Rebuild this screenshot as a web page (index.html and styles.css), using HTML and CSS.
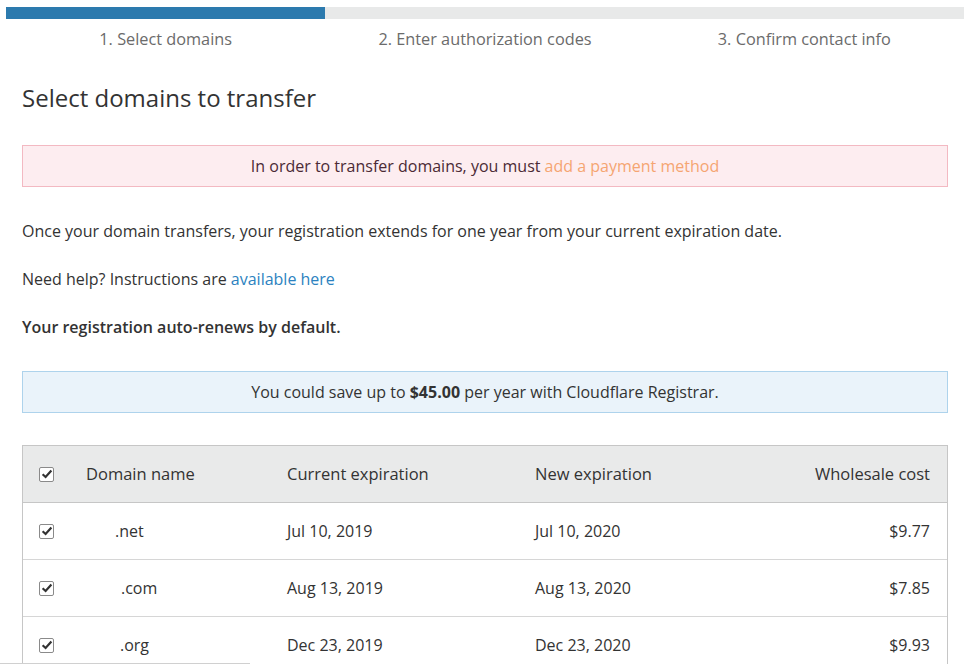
FILE: index.html
```html
<!DOCTYPE html>
<html>
<head>
<meta charset="utf-8">
<link rel="stylesheet" href="styles.css">
</head>
<body>
<div class="page">
  <div class="progress">
    <div class="progress-fill"></div>
  </div>
  <div class="steps">
    <div class="step">1. Select domains</div>
    <div class="step">2. Enter authorization codes</div>
    <div class="step">3. Confirm contact info</div>
  </div>
  <div class="content">
    <h1 class="title">Select domains to transfer</h1>
    <div class="alert alert-error">In order to transfer domains, you must <a class="link-orange" href="#">add a payment method</a></div>
    <p class="text">Once your domain transfers, your registration extends for one year from your current expiration date.</p>
    <p class="text">Need help? Instructions are <a class="link-blue" href="#">available here</a></p>
    <p class="text strong">Your registration auto-renews by default.</p>
    <div class="alert alert-info">You could save up to <b class="amount">$45.00</b> per year with Cloudflare Registrar.</div>
    <div class="table">
      <div class="row head">
        <div class="cell c-check"><span class="cb"><svg viewBox="0 0 14 14" width="14" height="14"><path d="M2.6 7.2 L5.6 10 L11.4 3.6" fill="none" stroke="#333" stroke-width="2.2"/></svg></span></div>
        <div class="cell c-name">Domain name</div>
        <div class="cell c-cur">Current expiration</div>
        <div class="cell c-new">New expiration</div>
        <div class="cell c-cost">Wholesale cost</div>
      </div>
      <div class="row">
        <div class="cell c-check"><span class="cb"><svg viewBox="0 0 14 14" width="14" height="14"><path d="M2.6 7.2 L5.6 10 L11.4 3.6" fill="none" stroke="#333" stroke-width="2.2"/></svg></span></div>
        <div class="cell c-name"><span class="dom dom-net">.net</span></div>
        <div class="cell c-cur">Jul 10, 2019</div>
        <div class="cell c-new">Jul 10, 2020</div>
        <div class="cell c-cost">$9.77</div>
      </div>
      <div class="row">
        <div class="cell c-check"><span class="cb"><svg viewBox="0 0 14 14" width="14" height="14"><path d="M2.6 7.2 L5.6 10 L11.4 3.6" fill="none" stroke="#333" stroke-width="2.2"/></svg></span></div>
        <div class="cell c-name"><span class="dom dom-com">.com</span></div>
        <div class="cell c-cur">Aug 13, 2019</div>
        <div class="cell c-new">Aug 13, 2020</div>
        <div class="cell c-cost">$7.85</div>
      </div>
      <div class="row">
        <div class="cell c-check"><span class="cb"><svg viewBox="0 0 14 14" width="14" height="14"><path d="M2.6 7.2 L5.6 10 L11.4 3.6" fill="none" stroke="#333" stroke-width="2.2"/></svg></span></div>
        <div class="cell c-name"><span class="dom dom-org">.org</span></div>
        <div class="cell c-cur">Dec 23, 2019</div>
        <div class="cell c-new">Dec 23, 2020</div>
        <div class="cell c-cost">$9.93</div>
      </div>
    </div>
  </div>
  <div class="scrollbar"></div>
</div>
</body>
</html>
```
FILE: styles.css
```css
html, body {
  margin: 0;
  padding: 0;
  background: #fff;
  overflow: hidden;
}
body {
  font-family: "Open Sans", "Noto Sans", sans-serif;
  font-size: 16px;
  color: #333;
}
.page {
  width: 966px;
  height: 664px;
  position: relative;
  overflow: hidden;
}
.progress {
  margin: 7px 2px 0 6px;
  height: 12px;
  background: #e8e9e9;
}
.progress-fill {
  width: 33.33%;
  height: 100%;
  background: #2c7aae;
}
.steps {
  display: grid;
  grid-template-columns: 1fr 1fr 1fr;
  margin: 0 2px 0 6px;
}
.step {
  text-align: center;
  color: #6b6b6b;
  font-size: 16.3px;
  line-height: 20px;
  padding-top: 10px;
}
.content {
  padding: 0 18px 0 22px;
}
.title {
  font-weight: 400;
  font-size: 24px;
  line-height: 30px;
  margin: 34px 0 0 0;
  color: #333;
}
.alert {
  text-align: center;
  height: 40px;
  line-height: 40px;
  font-size: 16px;
}
.alert-error {
  margin-top: 32px;
  background: #fdedf0;
  border: 1px solid #f3b9c2;
  color: #4b2a35;
}
.link-orange { color: #f5a572; text-decoration: none; }
.link-blue { color: #2c82c0; text-decoration: none; }
.text {
  margin: 0;
  line-height: 20px;
  font-size: 16px;
}
.alert-error + .text { margin-top: 34px; }
.text + .text { margin-top: 28px; }
.strong { font-weight: 600; }
.alert-info {
  margin-top: 34px;
  background: #eaf3fa;
  border: 1px solid #aed3ec;
  color: #333;
}
.amount { font-weight: 700; }
.table {
  margin-top: 32px;
  border: 1px solid #c6c6c6;
  border-bottom: none;
}
.row {
  display: flex;
  align-items: center;
  height: 56px;
  border-top: 1px solid #d6d6d6;
  background: #fff;
}
.row.head {
  border-top: none;
  background: #e9eaea;
  border-bottom: 1px solid #c6c6c6;
  height: 54px;
  padding-bottom: 2px;
}
.row.head .cell { font-size: 16.5px; }
.row.head .c-check { padding-top: 2px; }
.row.head + .row { border-top: none; }
.cell { font-size: 16px; }
.c-check { width: 63px; padding-left: 16px; box-sizing: border-box; display: flex; }
.c-name { width: 201px; }
.c-cur { width: 248px; }
.c-new { flex: 1; }
.c-cost { width: 200px; text-align: right; padding-right: 17px; box-sizing: border-box; }
.cb {
  width: 13px;
  height: 13px;
  border: 1px solid #8a8a8a;
  border-radius: 2px;
  background: #fff;
  display: inline-flex;
  align-items: center;
  justify-content: center;
  overflow: hidden;
}
.cb svg { flex: none; }
.dom-net { margin-left: 29px; }
.dom-com { margin-left: 35px; }
.dom-org { margin-left: 34px; }
.scrollbar {
  position: absolute;
  left: 0;
  bottom: 0;
  width: 250px;
  height: 1px;
  background: #d0d0d0;
}
```
